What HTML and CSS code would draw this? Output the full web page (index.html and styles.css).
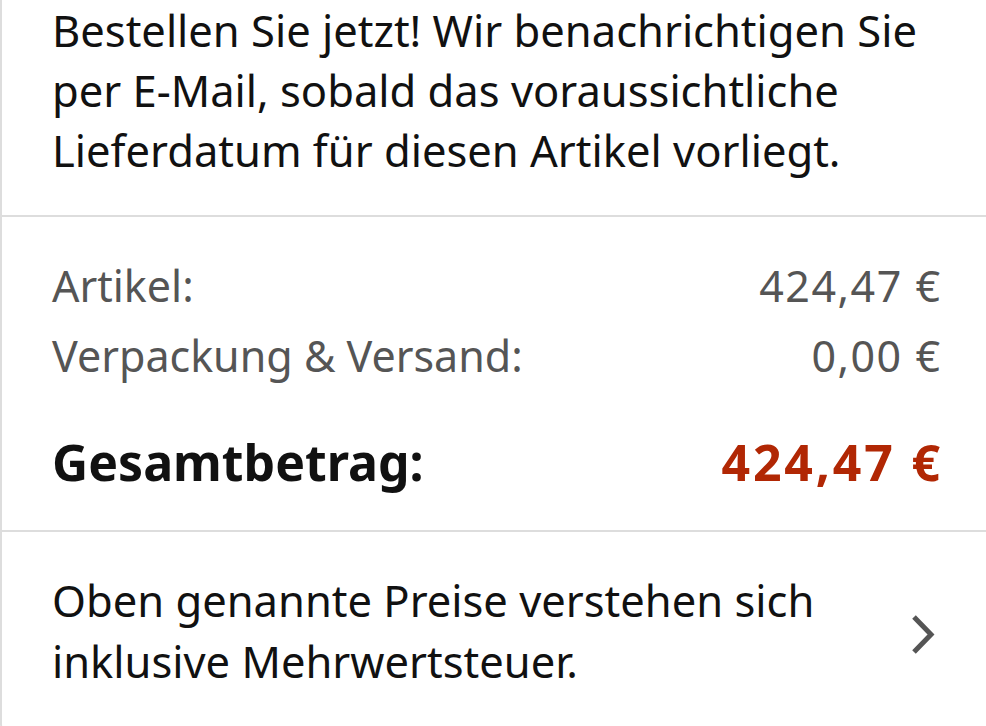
FILE: index.html
```html
<!DOCTYPE html>
<html lang="de">
<head>
  <meta charset="UTF-8">
  <meta name="viewport" content="width=device-width, initial-scale=1.0">
  <title>Bestellübersicht</title>
  <link rel="stylesheet" href="styles.css">
</head>
<body>
  <div class="card">
    <div class="section notice">
      <p>Bestellen Sie jetzt! Wir benachrichtigen Sie per E-Mail, sobald das voraussichtliche Lieferdatum für diesen Artikel vorliegt.</p>
    </div>

    <div class="section summary">
      <div class="row">
        <span>Artikel:</span>
        <span class="amount">424,47 €</span>
      </div>
      <div class="row">
        <span>Verpackung &amp; Versand:</span>
        <span class="amount">0,00 €</span>
      </div>
      <div class="row total">
        <span>Gesamtbetrag:</span>
        <span class="amount price">424,47 €</span>
      </div>
    </div>

    <a class="section tax" href="#">
      <p>Oben genannte Preise verstehen sich inklusive Mehrwertsteuer.</p>
      <svg class="chevron" width="28" height="40" viewBox="0 0 28 40">
        <path d="M5 2 L22 19.5 L5 37" fill="none" stroke="#555" stroke-width="5"/>
      </svg>
    </a>
  </div>
</body>
</html>
```

FILE: styles.css
```css
* {
  margin: 0;
  padding: 0;
  box-sizing: border-box;
}

html {
  font-family: "Noto Sans", "Open Sans", sans-serif;
}

body {
  background-color: #fff;
  color: #111;
  width: 986px;
  height: 726px;
  overflow: hidden;
}

.card {
  border-left: 2px solid #ddd;
  border-bottom-left-radius: 8px;
}

.section {
  display: block;
  padding: 0 46px 0 50px;
  border-bottom: 2px solid #ddd;
}

.section:last-child {
  border-bottom: none;
}

.notice {
  padding-bottom: 35px;
}

.notice p {
  font-size: 43.5px;
  line-height: 60px;
}

.summary {
  padding-top: 34px;
  padding-bottom: 33px;
}

.row {
  display: flex;
  justify-content: space-between;
  font-size: 43px;
  line-height: 70px;
  color: #555;
}

.row .amount {
  letter-spacing: 1.5px;
  margin-right: -1.5px;
}

.row.total {
  margin-top: 36px;
  font-size: 50px;
  font-weight: bold;
  color: #111;
}

.row.total .amount {
  letter-spacing: 2.8px;
  margin-right: -2.8px;
}

.row .price {
  color: #b12704;
}

.tax {
  display: flex;
  align-items: center;
  justify-content: space-between;
  padding-top: 38px;
  padding-bottom: 40px;
  color: #111;
  text-decoration: none;
}

.tax p {
  font-size: 43.5px;
  line-height: 61px;
  width: 790px;
}

.chevron {
  flex-shrink: 0;
  margin-top: 8px;
  margin-right: 3px;
}
```
